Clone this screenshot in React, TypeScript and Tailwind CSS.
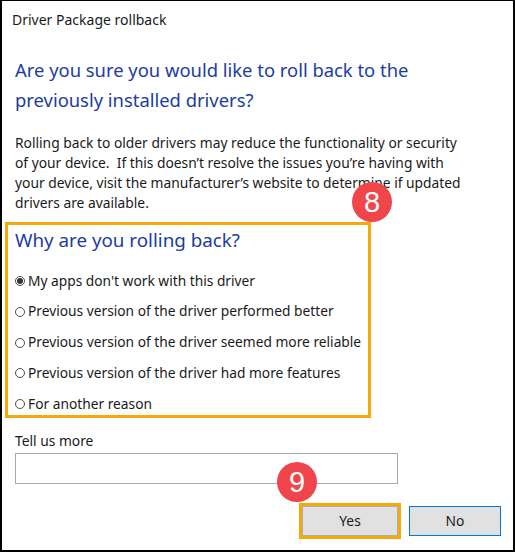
import React from "react";

const reasons = [
  "My apps don't work with this driver",
  "Previous version of the driver performed better",
  "Previous version of the driver seemed more reliable",
  "Previous version of the driver had more features",
  "For another reason",
];

function Radio({ checked }: { checked?: boolean }) {
  return (
    <span className="flex h-[10px] w-[10px] shrink-0 items-center justify-center rounded-full border border-[#4d4d4d] bg-white">
      {checked && <span className="h-[6px] w-[6px] rounded-full bg-[#333]" />}
    </span>
  );
}

function Badge({ n, className }: { n: string; className: string }) {
  return (
    <div
      className={`absolute flex h-[40px] w-[40px] items-center justify-center rounded-full bg-[#f0464b] text-[29px] leading-none text-white font-['Liberation_Sans',sans-serif] ${className}`}
    >
      {n}
    </div>
  );
}

export default function App() {
  return (
    <div className="relative h-[552px] w-[515px] overflow-hidden border-x-2 border-t border-b-2 border-black bg-white text-[#1a1a1a] font-['Noto_Sans',sans-serif]">
      <div className="pl-[10px] pt-[9px] text-[14px] leading-[20px]">Driver Package rollback</div>

      <div className="mt-[25px] px-[13px] text-[18.4px] leading-[30px] text-[#1c3d9f]">
        Are you sure you would like to roll back to the
        <br />
        previously installed drivers?
      </div>

      <p className="mt-[18px] px-[13px] text-[13.8px] leading-[20px]">
        Rolling back to older drivers may reduce the functionality or security
        <br />
        of your device.&nbsp; If this doesn’t resolve the issues you’re having with
        <br />
        your device, visit the manufacturer’s website to determine if updated
        <br />
        drivers are available.
      </p>

      <div className="ml-[3px] mt-[9px] w-[366px] border-[3px] border-[#f6a90b] pl-[7px]">
        <div className="pt-[2px] text-[18.8px] leading-[26px] text-[#1c3d9f]">Why are you rolling back?</div>
        <div className="mt-[17px] flex flex-col gap-[8.75px]">
          {reasons.map((r, i) => (
            <div key={r} className="flex h-[22px] items-center gap-[3px] text-[13.75px]">
              <Radio checked={i === 0} />
              <span>{r}</span>
            </div>
          ))}
        </div>
      </div>

      <div className="mt-[13px] px-[13px] text-[13.8px] leading-[20px]">Tell us more</div>
      <div className="ml-[13px] mt-[2px] h-[31px] w-[383px] border border-[#a9a9a9] bg-white" />

      <div className="mt-[19px] flex items-center justify-end gap-[8px] pr-[12px]">
        <div className="h-[36px] w-[102px] border-[3px] border-[#f6a90b]">
          <button className="h-full w-full border border-[#adadad] bg-[#e1e1e1] text-[13.8px] text-[#1a1a1a]">
            Yes
          </button>
        </div>
        <button className="h-[30px] w-[92px] border border-[#0078d7] bg-[#e1e1e1] text-[13.8px] text-[#1a1a1a]">
          No
        </button>
      </div>

      <Badge n="8" className="left-[350px] top-[181px]" />
      <Badge n="9" className="left-[275px] top-[461px]" />
    </div>
  );
}
